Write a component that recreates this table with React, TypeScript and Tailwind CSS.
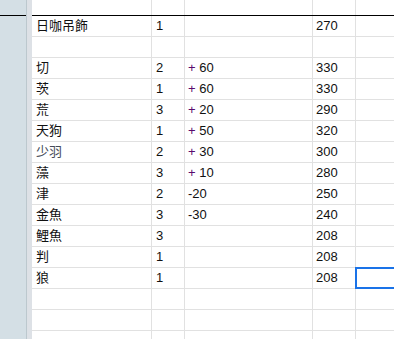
import React from "react";

type Row = { a?: string; b?: string; c?: string; d?: string; sel?: boolean; light?: boolean };

const rows: Row[] = [
  { a: "日咖吊飾", b: "1", d: "270" },
  {},
  { a: "切", b: "2", c: "+60", d: "330" },
  { a: "茨", b: "1", c: "+60", d: "330" },
  { a: "荒", b: "3", c: "+20", d: "290" },
  { a: "天狗", b: "1", c: "+50", d: "320" },
  { a: "少羽", b: "2", c: "+30", d: "300", light: true },
  { a: "藻", b: "3", c: "+10", d: "280" },
  { a: "津", b: "2", c: "-20", d: "250" },
  { a: "金魚", b: "3", c: "-30", d: "240" },
  { a: "鯉魚", b: "3", d: "208" },
  { a: "判", b: "1", d: "208" },
  { a: "狼", b: "1", d: "208", sel: true },
  {},
  {},
  {},
];

function CVal({ v }: { v?: string }) {
  if (!v) return null;
  if (v.startsWith("+")) {
    return (
      <span>
        <span className="text-[#5a0a6e]">+</span> {v.slice(1)}
      </span>
    );
  }
  return <span>{v}</span>;
}

function Gutter({ h }: { h: string }) {
  return (
    <div className={`flex shrink-0 ${h}`}>
      <div className="w-[26px] bg-[#d4dfe5]" />
      <div className="w-[1px] bg-[#bcc8ce]" />
      <div className="w-[5px] bg-[#dde1e6]" />
    </div>
  );
}

export default function App() {
  const cell = "h-full border-r border-[#e1e1e1] shrink-0 flex items-center overflow-visible whitespace-nowrap";
  return (
    <div
      className="w-[394px] h-[339px] overflow-hidden bg-white text-[13px] text-[#111]"
      style={{ fontFamily: '"Liberation Sans", Arial, "Noto Sans CJK TC", sans-serif' }}
    >
      {/* top partial row */}
      <div className="flex h-[15px]">
        <Gutter h="h-[15px]" />
        <div className={`${cell} w-[120px]`} />
        <div className={`${cell} w-[33px]`} />
        <div className={`${cell} w-[128px]`} />
        <div className={`${cell} w-[43px]`} />
        <div className="flex-1" />
      </div>
      {/* black line */}
      <div className="flex h-[1px]">
        <div className="w-[26px] bg-black" />
        <div className="w-[1px] bg-[#bcc8ce]" />
        <div className="w-[5px] bg-[#dde1e6]" />
        <div className="flex-1 bg-black" />
      </div>
      {rows.map((r, i) => (
        <div key={i} className={`flex ${i === 0 ? "h-[21px]" : "h-[21px]"}`}>
          <Gutter h="h-full" />
          <div className="flex flex-1 border-b border-[#e1e1e1]">
            <div className={`${cell} w-[120px] pl-[4px] ${r.light ? "text-[#444a58]" : ""}`}>{r.a}</div>
            <div className={`${cell} w-[33px] pl-[4px]`}>{r.b}</div>
            <div className={`${cell} w-[128px] pl-[3px]`}>
              <CVal v={r.c} />
            </div>
            <div className={`${cell} w-[43px] pl-[3px]`}>{r.d}</div>
            <div className="relative h-full flex-1">
              {r.sel && (
                <div className="absolute left-[-1px] top-[-1px] h-[22px] w-[60px] border-2 border-[#1a73e8]" />
              )}
            </div>
          </div>
        </div>
      ))}
    </div>
  );
}
